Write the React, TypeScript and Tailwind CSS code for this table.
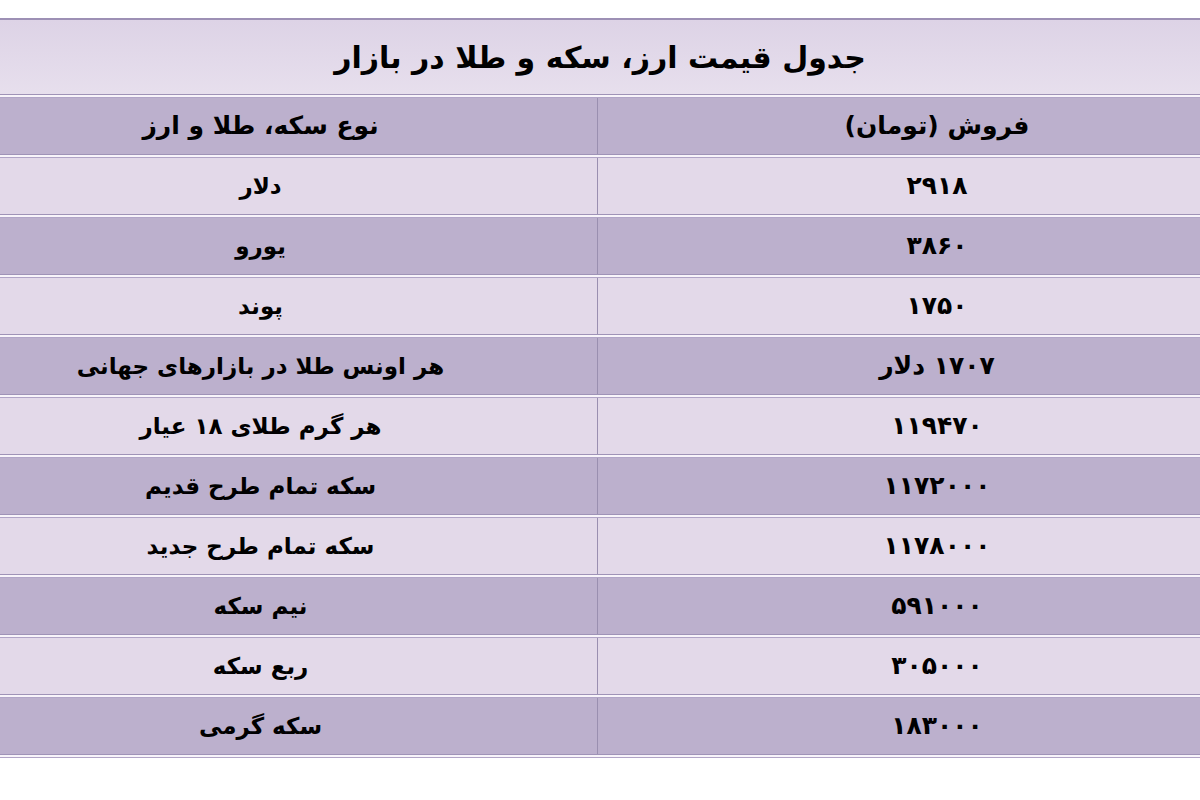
const rows: { name: string; price: string }[] = [
  { name: 'دلار', price: '۲۹۱۸' },
  { name: 'یورو', price: '۳۸۶۰' },
  { name: 'پوند', price: '۱۷۵۰' },
  { name: 'هر اونس طلا در بازارهای جهانی', price: '۱۷۰۷ دلار' },
  { name: 'هر گرم طلای ۱۸ عیار', price: '۱۱۹۴۷۰' },
  { name: 'سکه تمام طرح قدیم', price: '۱۱۷۲۰۰۰' },
  { name: 'سکه تمام طرح جدید', price: '۱۱۷۸۰۰۰' },
  { name: 'نیم سکه', price: '۵۹۱۰۰۰' },
  { name: 'ربع سکه', price: '۳۰۵۰۰۰' },
  { name: 'سکه گرمی', price: '۱۸۳۰۰۰' },
];

function Separator() {
  return (
    <div className="flex flex-col">
      <div className="h-px bg-[#9f93b7]" />
      <div className="h-[2px] bg-[#f8f4fa]" />
      <div className="h-px bg-[#b1a5c7]" />
    </div>
  );
}

interface RowProps {
  name: string;
  price: string;
  dark: boolean;
  header?: boolean;
}

function Row({ name, price, dark, header }: RowProps) {
  return (
    <div>
      <Separator />
      <div
        className={`grid grid-cols-[598px_1fr] h-[56px] ${dark ? 'bg-[#bcb0cd]' : 'bg-[#e3d9e9]'}`}
      >
        <div
          className={`flex items-center justify-center pr-[76px] border-r border-[#9a8fb0] ${header ? 'text-[25px]' : 'text-[23px]'}`}
        >
          <span dir="rtl">{name}</span>
        </div>
        <div className="flex items-center justify-center pl-[76px] text-[25px]">
          <span dir="rtl">{price}</span>
        </div>
      </div>
    </div>
  );
}

export default function App() {
  return (
    <div
      className="w-[1200px] h-[800px] bg-white pt-[18px] text-black font-bold"
      style={{ fontFamily: '"DejaVu Sans", sans-serif' }}
    >
      <div className="border-t-2 border-[#9d90b5]">
        <div className="h-[74px] flex items-center justify-center bg-gradient-to-b from-[#ddd3e6] to-[#e7dfed]">
          <span dir="rtl" className="text-[30px]">
            جدول قیمت ارز، سکه و طلا در بازار
          </span>
        </div>
        <Row name="نوع سکه، طلا و ارز" price="فروش (تومان)" dark header />
        {rows.map((r, i) => (
          <Row key={r.name} name={r.name} price={r.price} dark={i % 2 === 1} />
        ))}
        <Separator />
      </div>
    </div>
  );
}
